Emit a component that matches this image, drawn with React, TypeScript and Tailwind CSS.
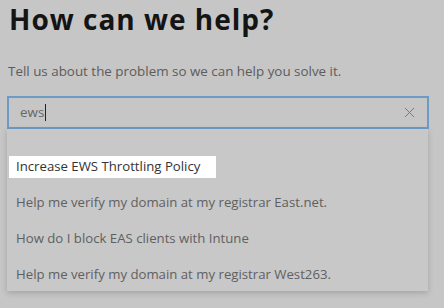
import { X } from 'lucide-react'

const ITEMS = [
  'Increase EWS Throttling Policy',
  'Help me verify my domain at my registrar East.net.',
  'How do I block EAS clients with Intune',
  'Help me verify my domain at my registrar West263.',
]

export default function App() {
  return (
    <div
      className="w-[444px] h-[308px] overflow-hidden bg-[#c6c6c6] relative"
      style={{ fontFamily: '"Open Sans", "Noto Sans", sans-serif' }}
    >
      <h1 className="pl-[9px] pt-0 text-[28px] leading-[38px] font-bold text-[#141414] tracking-[1px]">
        How can we help?
      </h1>
      <p className="pl-[8px] mt-[24px] text-[13.4px] leading-[18px] text-[#5c5c5c]">
        Tell us about the problem so we can help you solve it.
      </p>

      {/* Search input */}
      <div className="ml-[7px] mt-[16px] w-[422px] h-[33px] border-2 border-[#6d9bc6] flex items-center justify-between pl-[11px] pr-[9px]">
        <div className="flex items-center text-[13.4px] text-[#676767]">
          ews<span className="w-px h-[17px] bg-[#222] ml-px" />
        </div>
        <X size={17} strokeWidth={1.4} className="text-[#777]" />
      </div>

      {/* Suggestions dropdown */}
      <div className="ml-[7px] w-[421px] h-[162px] bg-[#c8c8c8] shadow-[0_2px_6px_rgba(0,0,0,0.18)] pt-[27px] pl-[2px]">
        {ITEMS.map((t, i) => (
          <div
            key={t}
            className={`h-[22px] flex items-center text-[13.2px] mb-[14px] ${
              i === 0 ? 'bg-white text-[#333] w-[207px] pl-[7px]' : 'text-[#606060] pl-[7px]'
            }`}
          >
            {t}
          </div>
        ))}
      </div>
    </div>
  )
}
